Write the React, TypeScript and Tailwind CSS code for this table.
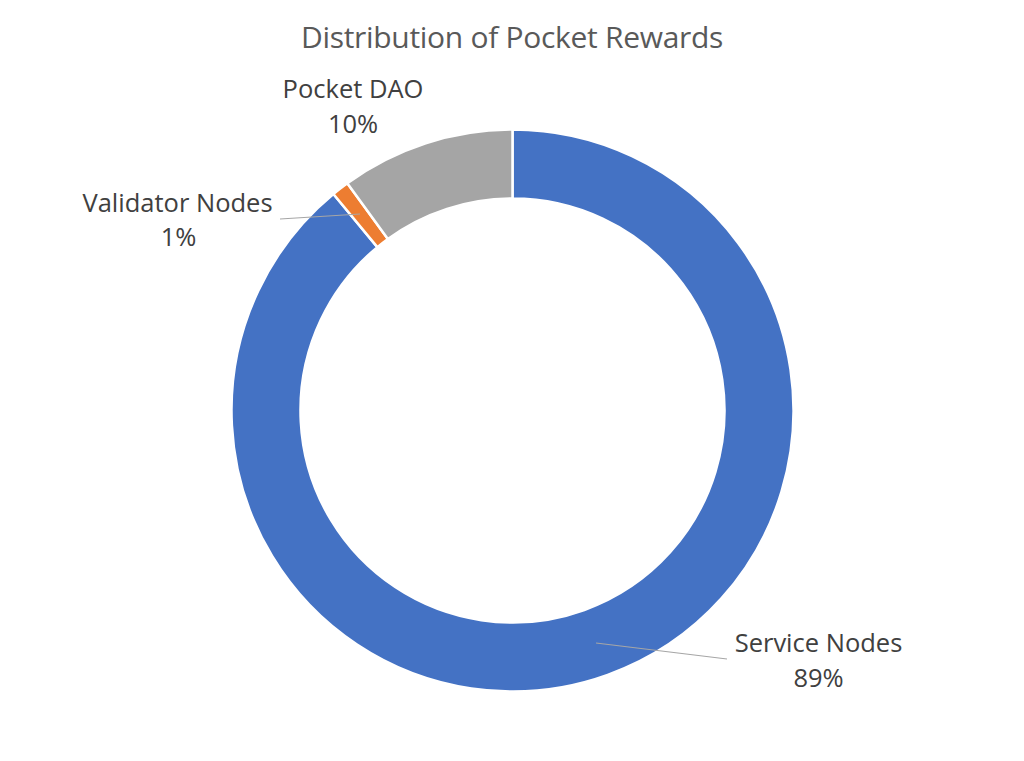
import React from 'react'

// donut geometry, in page pixels
const CX = 512.5
const CY = 410.5
const R_OUT = 281
const R_IN = 212

const slices = [
  { name: 'Service Nodes', value: 89, color: '#4472C4' },
  { name: 'Validator Nodes', value: 1, color: '#ED7D31' },
  { name: 'Pocket DAO', value: 10, color: '#A5A5A5' },
]

function pt(r: number, deg: number) {
  const a = (deg * Math.PI) / 180
  return [CX + r * Math.sin(a), CY - r * Math.cos(a)]
}

function arcPath(start: number, end: number) {
  const large = end - start > 180 ? 1 : 0
  const [x1, y1] = pt(R_OUT, start)
  const [x2, y2] = pt(R_OUT, end)
  const [x3, y3] = pt(R_IN, end)
  const [x4, y4] = pt(R_IN, start)
  return `M${x1} ${y1} A${R_OUT} ${R_OUT} 0 ${large} 1 ${x2} ${y2} L${x3} ${y3} A${R_IN} ${R_IN} 0 ${large} 0 ${x4} ${y4} Z`
}

export default function App() {
  let acc = 0
  const arcs = slices.map(s => {
    const start = (acc / 100) * 360
    acc += s.value
    const end = (acc / 100) * 360
    return { ...s, d: arcPath(start, end) }
  })

  return (
    <div className="w-[1024px] h-[761px] bg-white flex flex-col font-['Open_Sans','Liberation_Sans',sans-serif]">
      <h1 className="h-[70px] pt-[18px] text-center text-[30px] leading-[38px] text-[#595959] tracking-[-0.3px]">
        Distribution of Pocket Rewards
      </h1>
      <svg width="1024" height="691" viewBox="0 70 1024 691" className="block">
        {arcs.map(a => (
          <path key={a.name} d={a.d} fill={a.color} stroke="#ffffff" strokeWidth="2.5" />
        ))}

        {/* leader lines */}
        <line x1="280" y1="219" x2="360" y2="214" stroke="#A6A6A6" strokeWidth="1.2" />
        <line x1="596" y1="643" x2="727" y2="659" stroke="#A6A6A6" strokeWidth="1.2" />

        <g fill="#404040" fontSize="25.5" textAnchor="middle">
          <text x="353" y="98">Pocket DAO</text>
          <text x="353" y="133">10%</text>
          <text x="177.5" y="212">Validator Nodes</text>
          <text x="178.5" y="246">1%</text>
          <text x="818.5" y="652">Service Nodes</text>
          <text x="818.5" y="687">89%</text>
        </g>
      </svg>
    </div>
  )
}
